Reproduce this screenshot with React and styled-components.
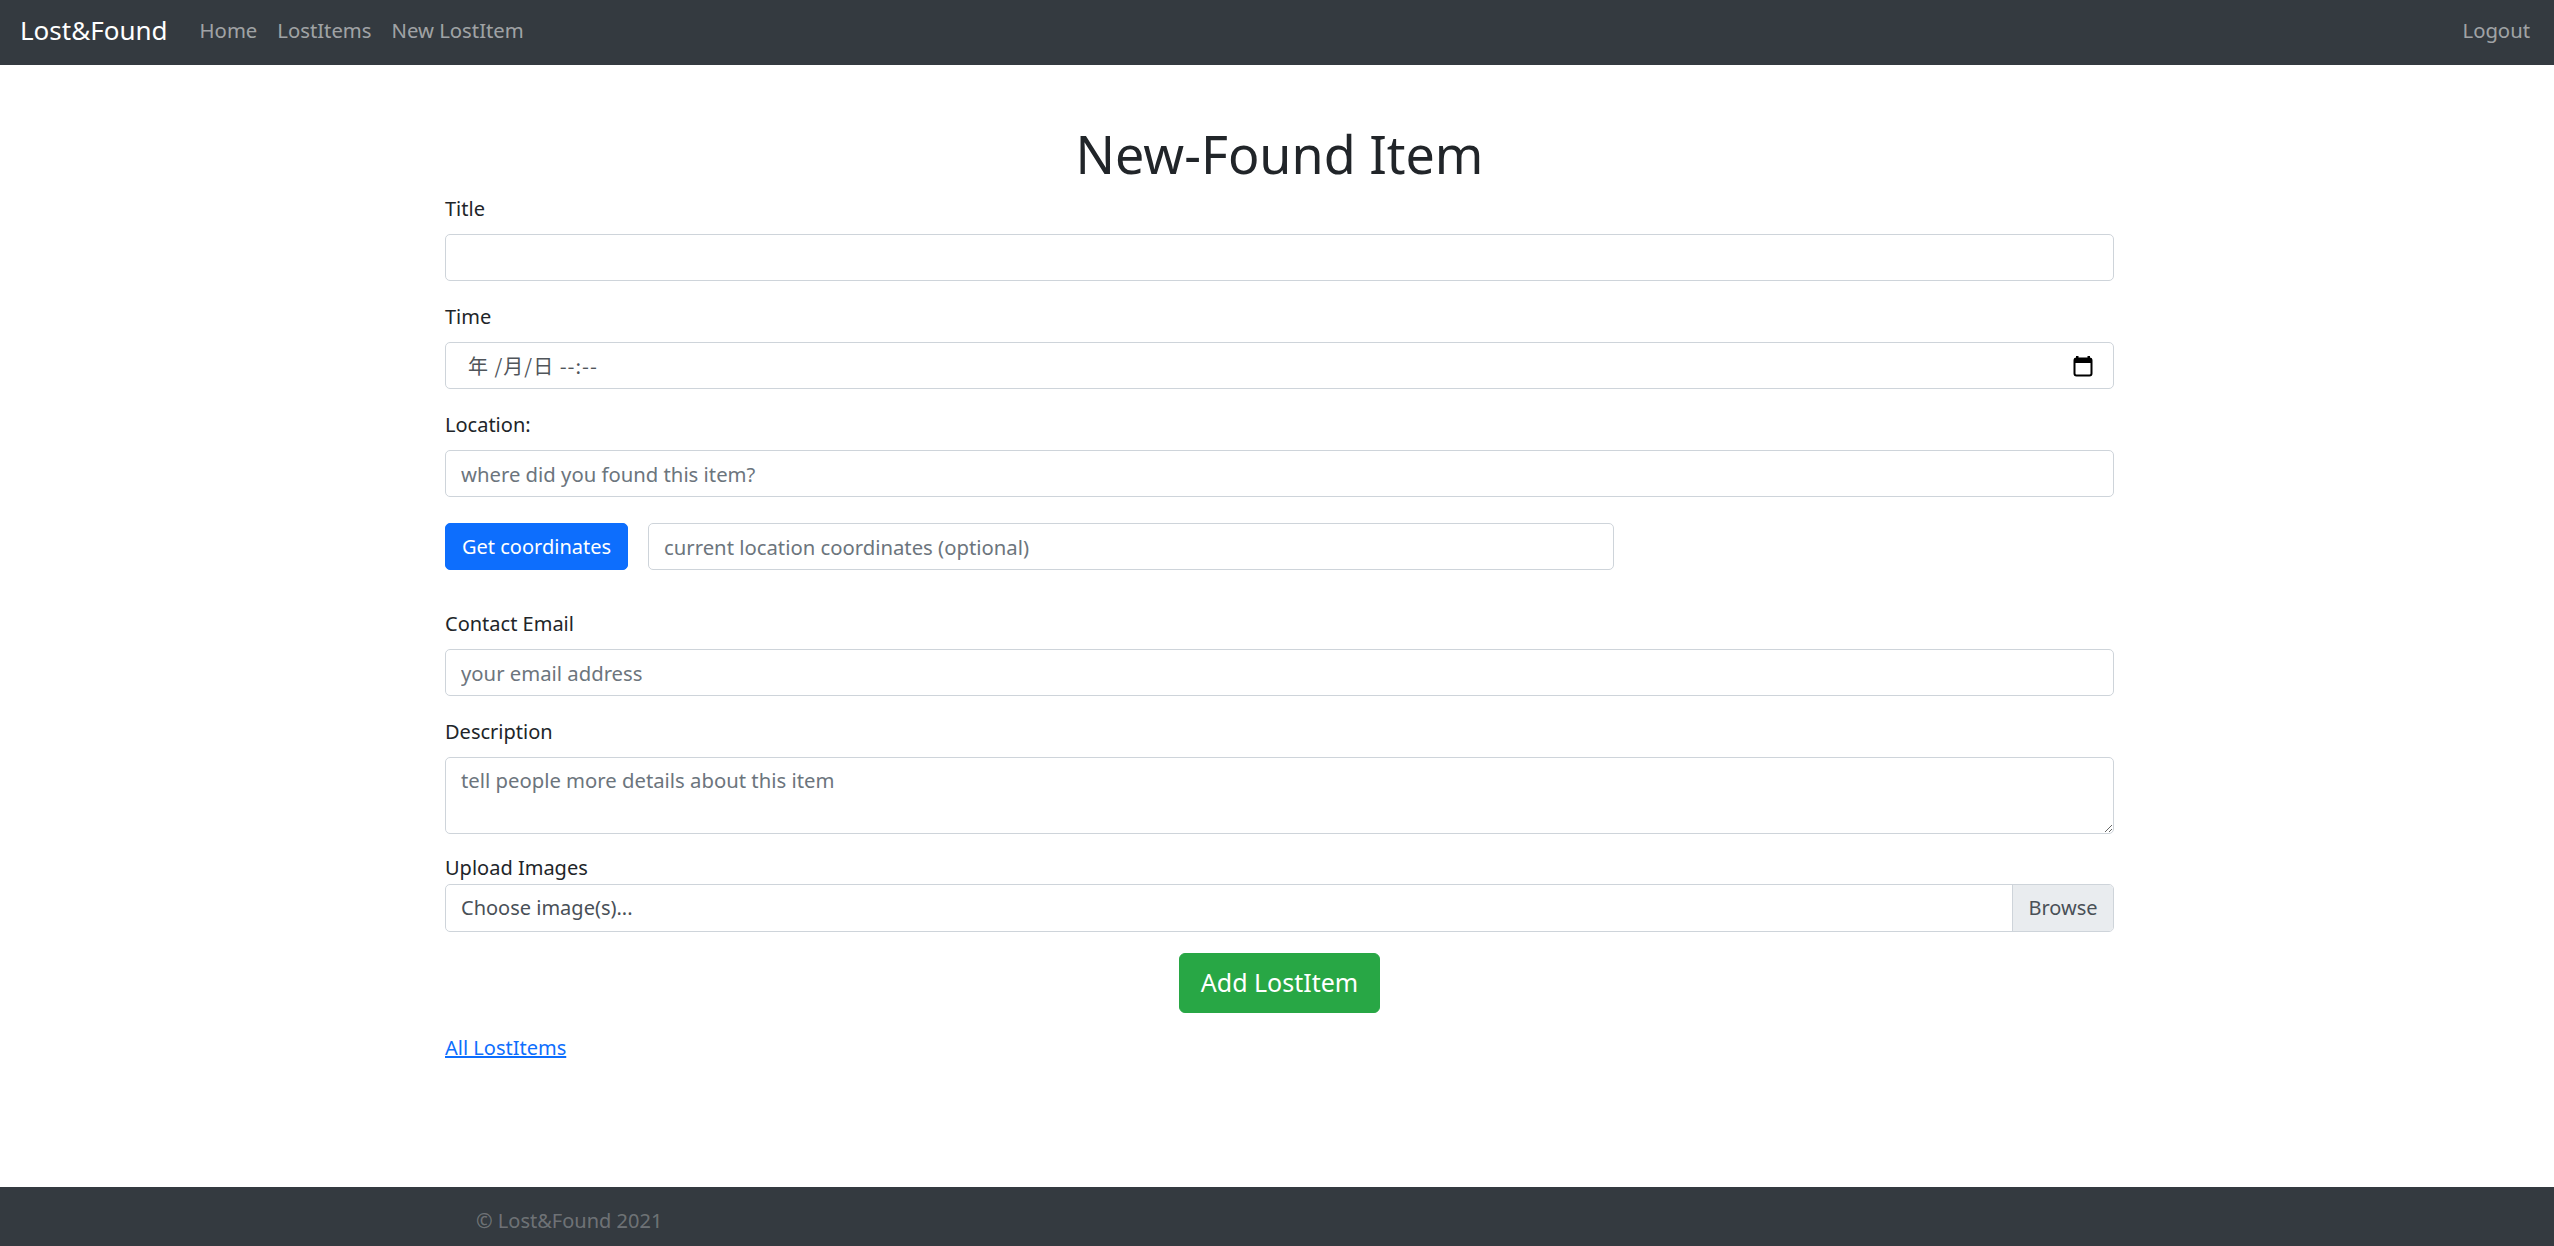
import React from 'react';
import styled, { createGlobalStyle } from 'styled-components';

const GlobalStyle = createGlobalStyle`
  *, *::before, *::after {
    box-sizing: border-box;
  }

  body {
    margin: 0;
    font-family: 'Segoe UI', 'Noto Sans', 'Noto Sans CJK SC', sans-serif;
    font-size: 20px;
    line-height: 1.5;
    color: #212529;
    background: #fff;
  }
`;

const Page = styled.div`
  min-height: 100vh;
  display: flex;
  flex-direction: column;
`;

const Navbar = styled.nav`
  height: 65px;
  background: #343a40;
  display: flex;
  align-items: center;
  padding: 0 14px 5px 20px;
`;

const Brand = styled.a`
  font-size: 26px;
  color: #fff;
  text-decoration: none;
  margin-right: 22px;
  line-height: 1.5;
`;

const NavLink = styled.a`
  padding: 0 10px;
  color: rgba(255, 255, 255, 0.55);
  text-decoration: none;
  font-size: 20.3px;
  margin-left: ${(p) => (p.$right ? 'auto' : '0')};
`;

const Main = styled.main`
  flex: 1;
`;

const Container = styled.div`
  width: 1669px;
  margin: 59px 0 0 calc(50% - 832px);
`;

const Heading = styled.h1`
  text-align: center;
  font-size: 52px;
  font-weight: 400;
  line-height: 60px;
  margin: 0 0 10px;
`;

const FormGroup = styled.div`
  margin-bottom: ${(p) => p.$mb ?? 21}px;
`;

const Label = styled.label`
  display: block;
  line-height: 30px;
  margin-bottom: ${(p) => (p.$tight ? 1 : 10)}px;
`;

const Input = styled.input`
  display: block;
  width: ${(p) => p.$width || '100%'};
  height: 47px;
  padding: 0 15px;
  font: inherit;
  font-size: 20.3px;
  color: #212529;
  border: 1px solid #ced4da;
  border-radius: 5px;
  background: #fff;
  outline: none;

  &::placeholder {
    color: #6c757d;
  }
`;

const FakeDate = styled.div`
  height: 47px;
  display: flex;
  align-items: center;
  justify-content: space-between;
  padding: 0 20px 0 15px;
  border: 1px solid #ced4da;
  border-radius: 5px;
  color: #50555a;
  font-family: 'Noto Sans CJK SC', 'Noto Sans', sans-serif;
  font-size: 20px;

  span {
    padding-left: 7px;
    letter-spacing: 1px;
  }
`;

const TextArea = styled.textarea`
  display: block;
  width: 100%;
  height: 77px;
  padding: 7px 15px;
  font: inherit;
  font-size: 20.3px;
  line-height: 30px;
  color: #212529;
  border: 1px solid #ced4da;
  border-radius: 5px;
  resize: vertical;
  outline: none;

  &::placeholder {
    color: #6c757d;
  }
`;

const CoordRow = styled.div`
  display: flex;
  gap: 20px;
  margin-bottom: 39px;
`;

const Button = styled.button`
  height: ${(p) => (p.$large ? 60 : 47)}px;
  padding: 0 ${(p) => (p.$large ? 21 : 16)}px;
  font: inherit;
  font-size: ${(p) => (p.$large ? 25 : 20)}px;
  color: #fff;
  background: ${(p) => p.$bg};
  border: 1px solid ${(p) => p.$bg};
  border-radius: ${(p) => (p.$large ? 6 : 5)}px;
  cursor: pointer;
`;

const FileBox = styled.div`
  height: 48px;
  display: flex;
  border: 1px solid #ced4da;
  border-radius: 5px;
  overflow: hidden;
  color: #495057;
`;

const FileText = styled.div`
  flex: 1;
  display: flex;
  align-items: center;
  padding: 0 15px;
`;

const Browse = styled.div`
  width: 101px;
  display: flex;
  align-items: center;
  justify-content: center;
  background: #e9ecef;
  border-left: 1px solid #ced4da;
`;

const SubmitRow = styled.div`
  display: flex;
  justify-content: center;
  margin: 21px 0 20px;
`;

const TextLink = styled.a`
  color: #0d6efd;
  text-decoration: underline;
  line-height: 30px;
`;

const Footer = styled.footer`
  height: 59px;
  background: #343a40;
  display: flex;
  align-items: center;
  padding-top: 8px;
`;

const FooterInner = styled.div`
  width: 1602px;
  margin: 0 auto;
  color: rgba(255, 255, 255, 0.3);
`;

const CalendarIcon = () => (
  <svg width="20" height="22" viewBox="0 0 20 22">
    <rect x="1.5" y="3.5" width="17" height="17" rx="2" fill="none" stroke="#000" strokeWidth="2" />
    <rect x="1.5" y="3.5" width="17" height="4.5" fill="#000" />
    <rect x="3" y="1" width="2.5" height="3" fill="#000" />
    <rect x="14.5" y="1" width="2.5" height="3" fill="#000" />
  </svg>
);

const App = () => (
  <>
    <GlobalStyle />
    <Page>
      <Navbar>
        <Brand href="#">Lost&amp;Found</Brand>
        <NavLink href="#">Home</NavLink>
        <NavLink href="#">LostItems</NavLink>
        <NavLink href="#">New LostItem</NavLink>
        <NavLink href="#" $right>Logout</NavLink>
      </Navbar>

      <Main>
        <Container>
          <Heading>New-Found Item</Heading>

          <FormGroup>
            <Label>Title</Label>
            <Input type="text" />
          </FormGroup>

          <FormGroup>
            <Label>Time</Label>
            <FakeDate>
              <span>年 /月/日 --:--</span>
              <CalendarIcon />
            </FakeDate>
          </FormGroup>

          <FormGroup $mb={26}>
            <Label>Location:</Label>
            <Input type="text" placeholder="where did you found this item?" />
          </FormGroup>

          <CoordRow>
            <Button $bg="#0d6efd">Get coordinates</Button>
            <Input type="text" $width="966px" placeholder="current location coordinates (optional)" />
          </CoordRow>

          <FormGroup>
            <Label>Contact Email</Label>
            <Input type="email" placeholder="your email address" />
          </FormGroup>

          <FormGroup $mb={19}>
            <Label>Description</Label>
            <TextArea placeholder="tell people more details about this item" />
          </FormGroup>

          <FormGroup $mb={0}>
            <Label $tight>Upload Images</Label>
            <FileBox>
              <FileText>Choose image(s)...</FileText>
              <Browse>Browse</Browse>
            </FileBox>
          </FormGroup>

          <SubmitRow>
            <Button $large $bg="#28a745">Add LostItem</Button>
          </SubmitRow>

          <TextLink href="#">All LostItems</TextLink>
        </Container>
      </Main>

      <Footer>
        <FooterInner>© Lost&amp;Found 2021</FooterInner>
      </Footer>
    </Page>
  </>
);

export default App;
